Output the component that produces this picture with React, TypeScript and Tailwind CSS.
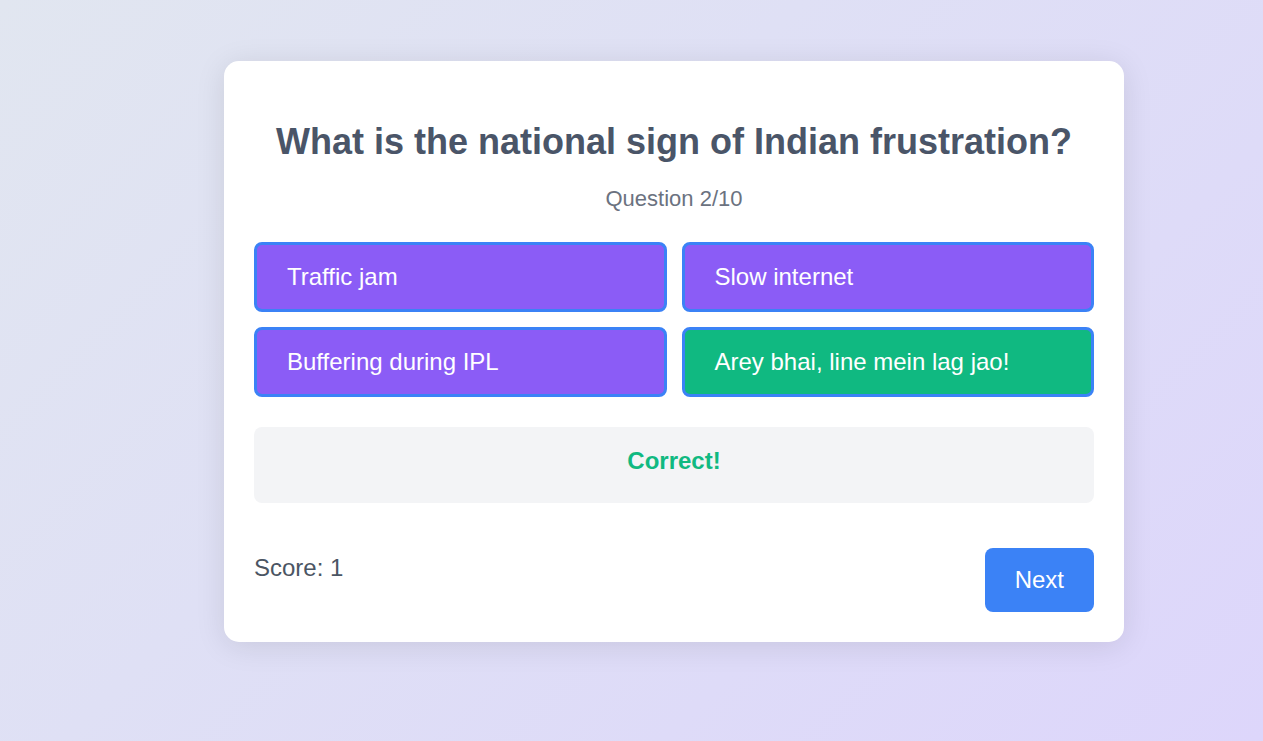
const answers = [
  { text: "Traffic jam", correct: false },
  { text: "Slow internet", correct: false },
  { text: "Buffering during IPL", correct: false },
  { text: "Arey bhai, line mein lag jao!", correct: true },
];

export default function App() {
  return (
    <main className="flex min-h-screen items-start justify-center bg-[linear-gradient(135deg,#e1e6f0,#dfe0f5_40%,#ddd6fb)] py-[61px] pl-[85px] font-['Liberation_Sans',Arial,sans-serif]">
      <section className="w-full max-w-[900px] rounded-[15px] bg-white p-[30px] shadow-[0_4px_30px_rgba(0,0,0,0.1)]">
        <h1 className="mt-[30px] text-center text-4xl leading-[42px] font-bold text-[#4a5568]">
          What is the national sign of Indian frustration?
        </h1>
        <p className="mt-[22px] text-center text-[22px] leading-7 text-[#6b7280]">Question 2/10</p>
        <div className="mt-[29px] grid grid-cols-2 gap-[15px]">
          {answers.map((answer) => (
            <button
              key={answer.text}
              type="button"
              className={
                answer.correct
                  ? "h-[70px] rounded-lg border-3 border-[#3b82f6] bg-[#10b981] px-[30px] text-left text-2xl text-white"
                  : "h-[70px] rounded-lg border-3 border-[#3b82f6] bg-[#8b5cf6] px-[30px] text-left text-2xl text-white"
              }
            >
              {answer.text}
            </button>
          ))}
        </div>
        <div role="status" className="mt-[30px] h-[76px] rounded-lg bg-[#f3f4f6] pt-5 text-center text-2xl leading-7 font-bold text-[#10b981]">
          Correct!
        </div>
        <footer className="mt-[45px] flex items-start justify-between text-2xl">
          <p className="pt-1 text-[#4b5563]">Score: 1</p>
          <button type="button" className="h-16 rounded-lg bg-[#3b82f6] px-[30px] text-white">
            Next
          </button>
        </footer>
      </section>
    </main>
  );
}
